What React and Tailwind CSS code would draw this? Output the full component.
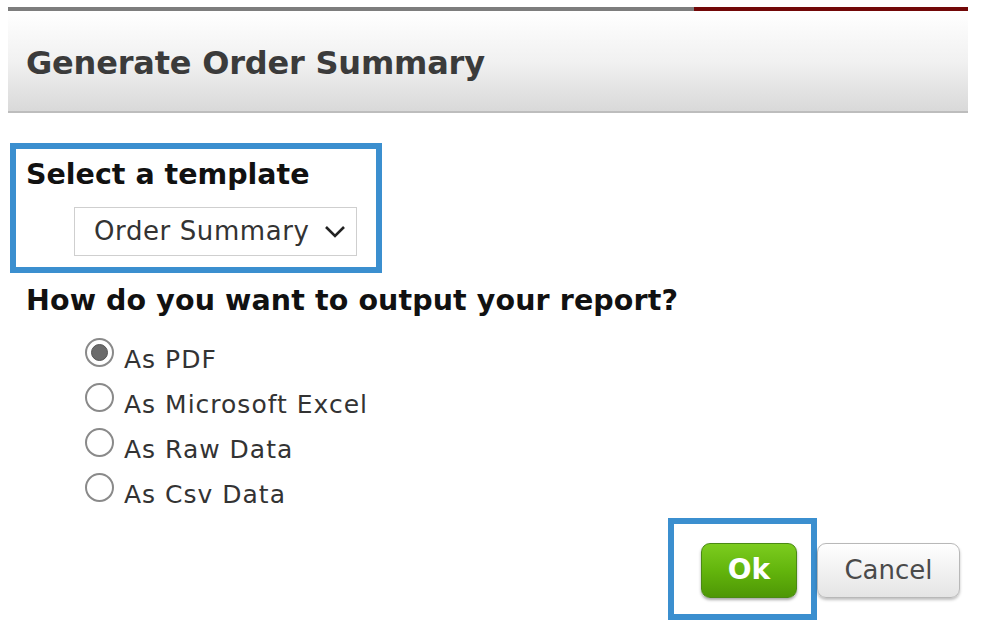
import React from "react";

const options = ["As PDF", "As Microsoft Excel", "As Raw Data", "As Csv Data"];

function Radio({ checked }) {
  return (
    <span className="w-[29px] h-[29px] rounded-full border-2 border-[#8a8a8a] bg-white flex items-center justify-center shrink-0">
      {checked && <span className="w-[17px] h-[17px] rounded-full bg-[#6b6b6b] border border-[#555]" />}
    </span>
  );
}

export default function App() {
  return (
    <div className="w-[984px] h-[638px] bg-white overflow-hidden font-['DejaVu_Sans',Verdana,sans-serif]">
      <div className="pt-[7px] pl-[8px] w-[968px]">
        <div className="flex h-[4px]">
          <div className="w-[686px] bg-[#7d7d7d]" />
          <div className="flex-1 bg-[#720808]" />
        </div>
        <div className="h-[102px] bg-gradient-to-b from-white via-[#f1f1f1] to-[#d9d9d9] border-b-2 border-[#bdbdbd] flex items-center pl-[18px] pt-[3px]">
          <h1 className="text-[32px] font-bold text-[#3b3b3b] tracking-[-0.2px]">
            Generate Order Summary
          </h1>
        </div>
      </div>

      <div className="mt-[30px] ml-[10px] w-[372px] h-[130px] border-[6px] border-[#3b8fcf] pl-[10px] pt-[10px]">
        <div className="text-[28.5px] font-bold text-[#111] leading-[32px]">Select a template</div>
        <div className="mt-[16px] ml-[48px] w-[283px] h-[49px] border border-[#cfcfcf] flex items-center pl-[19px] pr-[10px] justify-between">
          <span className="text-[26px] text-[#333] tracking-[0.6px]">Order Summary</span>
          <svg width="22" height="14" viewBox="0 0 22 14" fill="none">
            <path d="M2 2 L11 11 L20 2" stroke="#222" strokeWidth="2.6" />
          </svg>
        </div>
      </div>

      <div className="pl-[26px] mt-[11px] text-[28.5px] font-bold text-[#111] leading-[34px] tracking-[0.1px]">
        How do you want to output your report?
      </div>

      <div className="ml-[85px] mt-[20px] flex flex-col gap-[16px]">
        {options.map((o, i) => (
          <label key={o} className="flex items-center gap-[10px] h-[29px]">
            <Radio checked={i === 0} />
            <span className="text-[25px] text-[#333] tracking-[1px] mt-[14px]">{o}</span>
          </label>
        ))}
      </div>

      <div className="flex justify-end items-center pr-[24px] mt-[16px]">
        <div className="w-[149px] h-[102px] border-[6px] border-[#3b8fcf] flex items-center pl-[27px] pt-[2px]">
          <button className="w-[96px] h-[55px] rounded-[9px] border border-[#4a8a14] bg-gradient-to-b from-[#7ccc1e] via-[#63b50c] to-[#4e9706] text-white text-[28px] font-bold shadow-[0_2px_3px_rgba(0,0,0,0.35)]">
            Ok
          </button>
        </div>
        <button className="w-[143px] h-[55px] mt-[2px] rounded-[9px] border border-[#b8b8b8] bg-gradient-to-b from-white to-[#e4e4e4] text-[#4a4a4a] text-[26px] shadow-[0_2px_3px_rgba(0,0,0,0.25)]">
          Cancel
        </button>
      </div>
    </div>
  );
}
